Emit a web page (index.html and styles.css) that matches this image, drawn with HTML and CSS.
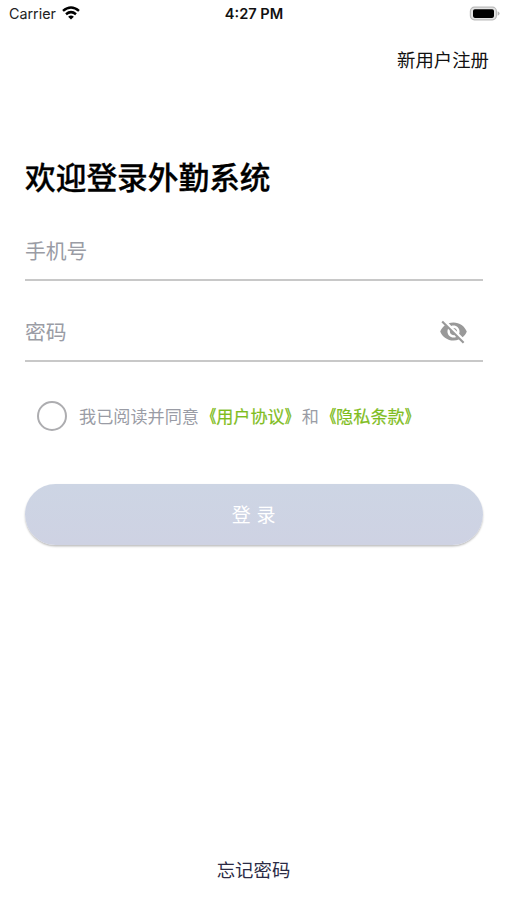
FILE: index.html
```html
<!DOCTYPE html>
<html lang="zh-CN">
<head>
<meta charset="utf-8">
<title>登录</title>
<link rel="stylesheet" href="styles.css">
</head>
<body>
<header class="status">
  <div class="carrier">
    <span>Carrier</span>
    <svg class="wifi" viewBox="0 0 18 14" width="18" height="14" fill="none" stroke="#000" stroke-width="2.5">
      <path d="M1 4.9Q9-1.9 17 4.9"/>
      <path d="M4 8.2Q9 4 14 8.2"/>
      <path d="M9 13.5 6.1 10.7Q9 8.3 11.9 10.7Z" fill="#000" stroke="none"/>
    </svg>
  </div>
  <span class="time">4:27 PM</span>
  <svg class="battery" viewBox="0 0 31 15" width="31" height="15">
    <rect x="1.4" y="1.2" width="26" height="12.6" rx="4" fill="#e4e4e4" stroke="#bbb" stroke-width="1.2"/>
    <rect x="4" y="3.3" width="21" height="8.6" rx="1.8" fill="#000"/>
    <path d="M28.6 5.2Q30.6 6 30.6 7.5T28.6 9.8Z" fill="#b5b5b5"/>
  </svg>
</header>
<nav class="top"><a class="register">新用户注册</a></nav>
<main class="login">
  <h1 class="title">欢迎登录外勤系统</h1>
  <div class="field"><span>手机号</span></div>
  <div class="field">
    <span>密码</span>
    <svg class="eye" viewBox="0 0 24 24" width="29" height="29" fill="#999">
      <path d="M12 7c2.76 0 5 2.24 5 5 0 .65-.13 1.26-.36 1.83l2.92 2.92c1.51-1.26 2.7-2.89 3.43-4.75-1.73-4.39-6-7.5-11-7.5-1.4 0-2.74.25-3.98.7l2.16 2.16C10.740 7.130 11.350 7 12 7zM2 4.270l2.280 2.280.46.46C3.080 8.300 1.780 10.020 1 12c1.730 4.390 6 7.500 11 7.500 1.550 0 3.030-.3 4.380-.84l.42.42L19.730 22 21 20.730 3.270 3 2 4.270zM7.530 9.800l1.550 1.550c-.05.21-.08.43-.08.65 0 1.660 1.340 3 3 3 .22 0 .44-.03.65-.08l1.550 1.550c-.67.33-1.410.53-2.200.53-2.760 0-5-2.240-5-5 0-.79.2-1.530.53-2.200zm4.310-.78l3.150 3.150.02-.16c0-1.660-1.340-3-3-3l-.17.01z"/>
    </svg>
  </div>
  <div class="agree">
    <i class="radio"></i>
    <p class="terms">我已阅读并同意<a><span class="open">《</span>用户协议<span class="close">》</span></a>和<a><span class="open">《</span>隐私条款<span class="close">》</span></a></p>
  </div>
  <button class="submit">登 录</button>
</main>
<footer class="forgot"><a>忘记密码</a></footer>
</body>
</html>
```
FILE: styles.css
```css
* {
  box-sizing: border-box;
}

body {
  margin: 0;
  height: 900px;
  display: flex;
  flex-direction: column;
  overflow: hidden;
  background: #fff;
  color: #111;
  font-family: "Noto Sans CJK SC", sans-serif;
}

.status {
  height: 28px;
  padding: 0 7px 0 9px;
  display: grid;
  grid-template-columns: 1fr auto 1fr;
  align-items: center;
  font: 14.3px/28px Inter, sans-serif;
}

.carrier {
  display: flex;
  align-items: center;
  gap: 6px;
  color: #222;
}

.wifi {
  margin-top: -2px;
}

.time {
  margin-right: 1px;
  font-size: 14.6px;
  font-weight: 600;
}

.battery {
  justify-self: end;
  margin-top: -2px;
}

.top {
  height: 62px;
  padding-right: 18px;
  display: flex;
  justify-content: flex-end;
  align-items: center;
}

.register {
  font-size: 18.4px;
}

.login {
  flex: 1;
  padding: 62px 24.5px 0 25px;
}

.title {
  margin: 0;
  font-size: 30.7px;
  line-height: 48px;
  font-weight: 500;
  color: #000;
  -webkit-text-stroke: 0.3px #000;
}

.field {
  height: 81px;
  padding: 0 15px 19px 0;
  border-bottom: 2px solid #c8c8c8;
  display: flex;
  align-items: flex-end;
  justify-content: space-between;
  font-size: 20.8px;
  line-height: 20px;
  color: #9a9ca5;
}

.eye {
  margin-bottom: -5px;
}

.agree {
  height: 30px;
  margin: 39px 0 0 12px;
  display: flex;
  align-items: center;
  gap: 12px;
}

.radio {
  width: 30px;
  height: 30px;
  border: 2px solid #adadb0;
  border-radius: 50%;
}

.terms {
  margin: -2px 0 0;
  font-size: 17.15px;
  white-space: nowrap;
  color: #9a9ca5;
}

.terms a {
  color: #7fbd1e;
  -webkit-text-stroke: 0.2px #7fbd1e;
}

.open,
.close {
  display: inline-block;
  transform: scaleX(0.75);
  -webkit-text-stroke: 0.6px #7fbd1e;
}

.open {
  transform-origin: right;
}

.close {
  transform-origin: left;
}

.submit {
  display: block;
  width: 100%;
  height: 61px;
  margin-top: 53px;
  padding: 0 0 2px;
  border: 0;
  border-radius: 31px;
  background: linear-gradient(#cdd5e4, #ced2e3);
  box-shadow: 0 1.5px 2px rgba(0, 0, 0, 0.25);
  color: #fff;
  font-family: inherit;
  font-size: 19px;
  word-spacing: 1.5px;
}

.forgot {
  height: 62px;
  display: flex;
  align-items: center;
  justify-content: center;
  font-size: 18.4px;
  color: #2b2b45;
}
```
